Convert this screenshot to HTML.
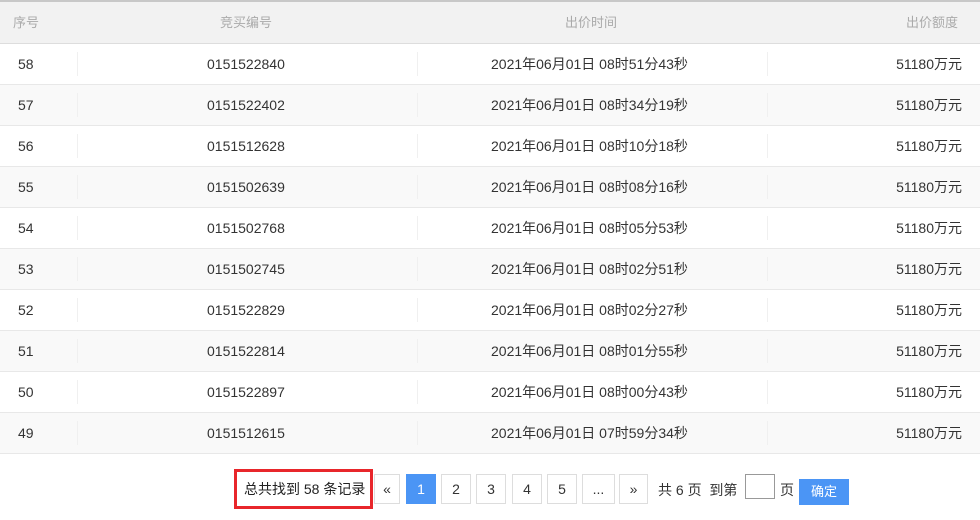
<!DOCTYPE html><html><head><meta charset="utf-8"><style>
body{margin:0;width:980px;height:520px;background:#fff;font-family:"Liberation Sans","Noto Sans CJK SC",sans-serif;position:relative;overflow:hidden;color:#333}
.hd{position:absolute;left:0;top:0;width:980px;height:41px;background:#f2f2f2;border-top:2px solid #c8c8c8;border-bottom:2px solid #ddd;box-sizing:content-box}
.hd span,.r span{position:absolute;font-size:14px;top:0;height:40px;line-height:40px}
.hd span{color:#aaa;font-size:13px;line-height:42px}
.r{position:absolute;left:0;width:980px;height:40px;border-bottom:1px solid #e8e8e8}
.r span{color:#333}
.r i{position:absolute;top:8px;width:1px;height:24px;background:#f0f0f0}
.b{position:absolute;top:474px;height:30px;border:1px solid #ddd;box-sizing:border-box;text-align:center;line-height:28px;font-size:14px;color:#333}
</style></head><body>
<div class="hd"><span style="left:13px">序号</span><span style="left:220px">竞买编号</span><span style="left:565px">出价时间</span><span style="right:22px">出价额度</span></div>
<div id="rows"></div>
<script>
var d=[["58","0151522840","08时51分43秒"],["57","0151522402","08时34分19秒"],["56","0151512628","08时10分18秒"],["55","0151502639","08时08分16秒"],["54","0151502768","08时05分53秒"],["53","0151502745","08时02分51秒"],["52","0151522829","08时02分27秒"],["51","0151522814","08时01分55秒"],["50","0151522897","08时00分43秒"],["49","0151512615","07时59分34秒"]];
var h="";d.forEach(function(x,i){h+='<div class="r" style="top:'+(44+i*41)+'px;background:'+(i%2?'#f9f9f9':'#fff')+'"><span style="left:18px">'+x[0]+'</span><i style="left:77px"></i><span style="left:207px">'+x[1]+'</span><i style="left:417px"></i><span style="left:491px">2021年06月01日 '+x[2]+'</span><i style="left:767px"></i><span style="right:18px">51180万元</span></div>'});
document.getElementById('rows').innerHTML=h;
</script>
<div style="position:absolute;left:234px;top:469px;width:139px;height:40px;border:3px solid #e8262b;box-sizing:border-box;font-size:14px;line-height:34px;padding-left:7px;color:#222">总共找到 58 条记录</div>
<div class="b" style="left:374px;width:26px">«</div>
<div class="b" style="left:406px;width:30px;background:#4b95f5;border-color:#4b95f5;color:#fff">1</div>
<div class="b" style="left:441px;width:30px">2</div>
<div class="b" style="left:476px;width:30px">3</div>
<div class="b" style="left:512px;width:30px">4</div>
<div class="b" style="left:547px;width:30px">5</div>
<div class="b" style="left:582px;width:33px">...</div>
<div class="b" style="left:619px;width:29px">»</div>
<div style="position:absolute;left:658px;top:480px;font-size:14px;line-height:20px">共 6 页&nbsp; 到第</div>
<div style="position:absolute;left:745px;top:474px;width:30px;height:25px;border:1px solid #999;box-sizing:border-box"></div>
<div style="position:absolute;left:780px;top:480px;font-size:14px;line-height:20px">页</div>
<div style="position:absolute;left:799px;top:479px;width:50px;height:26px;background:#4b95f5;color:#fff;font-size:13px;text-align:center;line-height:26px">确定</div>
</body></html>
